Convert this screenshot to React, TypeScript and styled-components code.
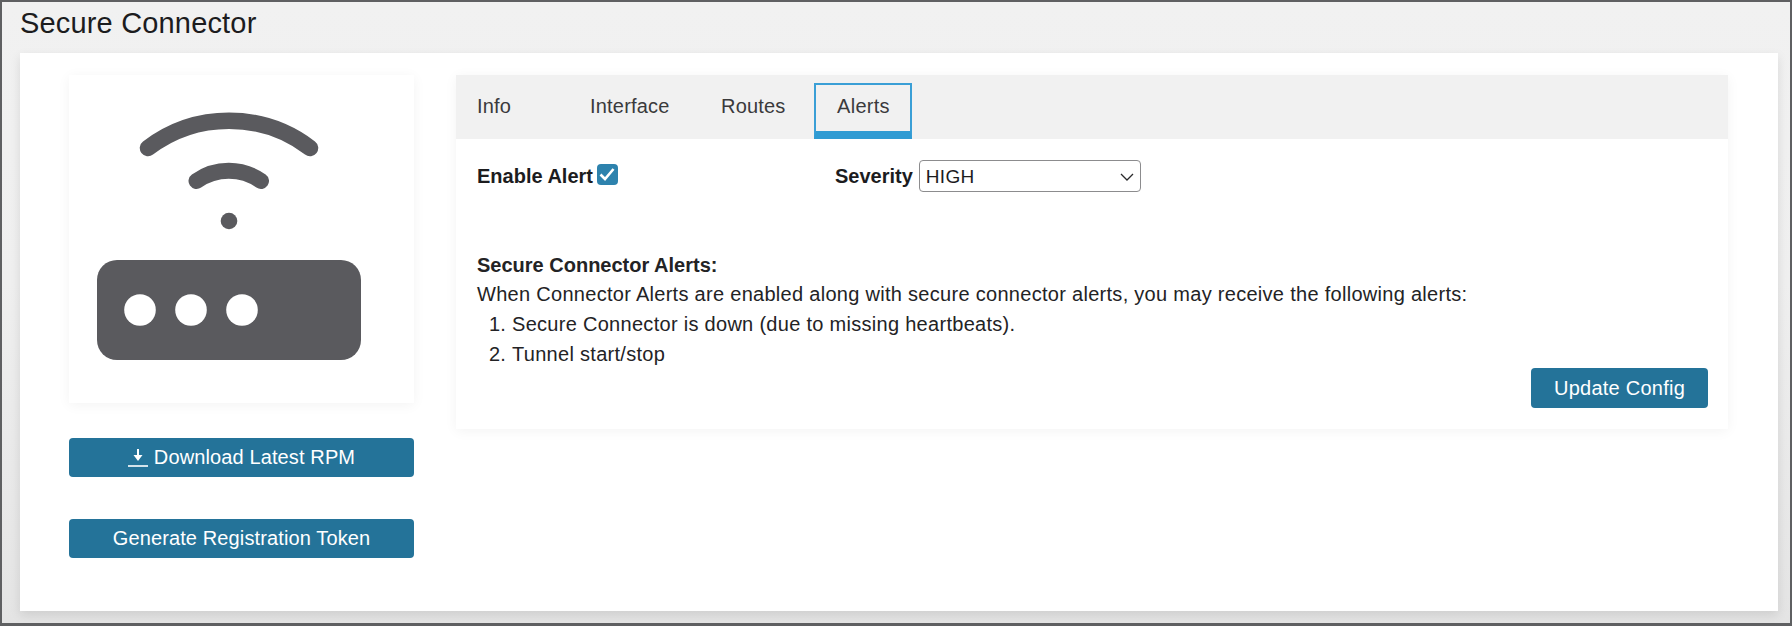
import React from "react";
import styled, { createGlobalStyle } from "styled-components";

const Global = createGlobalStyle`
  html, body { margin: 0; padding: 0; background: #fff; }
  body { font-family: "Liberation Sans", Arial, sans-serif; color: #1f1f21; }
`;

const Frame = styled.div`
  box-sizing: border-box;
  width: 1792px;
  height: 626px;
  border: 2px solid #5f6062;
  border-width: 2px 2px 3px 2px;
  background: linear-gradient(#f1f1f1, #efefef 45%, #e4e4e4);
  padding: 0 12px 0 18px;
  display: flex;
  flex-direction: column;
`;

const Title = styled.h1`
  margin: 0;
  height: 51px;
  font-size: 29px;
  font-weight: 400;
  line-height: 42px;
  color: #1c1c1e;
  letter-spacing: 0.17px;
`;

const Panel = styled.main`
  box-sizing: border-box;
  width: 1758px;
  height: 558px;
  background: #fff;
  box-shadow: 0 4px 10px rgba(0, 0, 0, 0.1);
  padding: 22px 50px 0 49px;
  display: flex;
  gap: 42px;
  align-items: flex-start;
`;

const Sidebar = styled.aside`
  width: 345px;
  flex: none;
  display: flex;
  flex-direction: column;
`;

const IconCard = styled.div`
  height: 328px;
  background: #fff;
  box-shadow: 0 2px 12px rgba(0, 0, 0, 0.05);
  margin-bottom: 35px;
`;

const RouterIcon = styled.svg`
  display: block;
`;

const Button = styled.button`
  box-sizing: border-box;
  width: 100%;
  height: 39px;
  border: none;
  border-radius: 4px;
  background: #247399;
  color: #fff;
  font-family: "Liberation Sans", Arial, sans-serif;
  font-size: 20px;
  letter-spacing: 0.12px;
  display: flex;
  align-items: center;
  justify-content: center;
  gap: 6px;
  padding: 0;
  flex: none;
`;

const SideButton = styled(Button)`
  margin-bottom: 42px;
`;

const UpdateButton = styled(Button)`
  width: 177px;
  height: 40px;
  letter-spacing: 0.25px;
`;

const Content = styled.section`
  width: 1272px;
  flex: none;
  background: #fff;
  box-shadow: 0 2px 12px rgba(0, 0, 0, 0.05);
  height: 354px;
`;

const TabBar = styled.nav`
  height: 64px;
  background: #f1f1f1;
  display: flex;
  align-items: flex-end;
`;

const Tab = styled.div<{ $width: number; $inset?: number; $active?: boolean }>`
  box-sizing: border-box;
  width: ${(p) => p.$width}px;
  height: 56px;
  font-size: 20px;
  letter-spacing: 0.2px;
  color: #3a3a3c;
  display: flex;
  align-items: center;
  padding-left: ${(p) => p.$inset ?? 0}px;
  padding-bottom: ${(p) => (p.$active ? 4 : 10)}px;
  ${(p) =>
    p.$active
      ? `border: 2px solid #3a9fd6; border-bottom: 8px solid #2f9bd3; padding-left: 21px; letter-spacing: 0.3px;`
      : ""}
`;

const Body = styled.div`
  padding: 21px 20px 0 21px;
  font-size: 20px;
  letter-spacing: 0.29px;
  color: #232325;
`;

const OptionRow = styled.div`
  display: flex;
  align-items: center;
  height: 32px;
`;

const Label = styled.label`
  font-weight: 700;
  letter-spacing: 0;
  color: #1c1c1e;
`;

const CheckBox = styled.span`
  width: 21px;
  height: 21px;
  border-radius: 4px;
  background: #2d82ad;
  margin-left: 4px;
  margin-top: -4px;
  display: flex;
  align-items: center;
  justify-content: center;
`;

const SeverityLabel = styled(Label)`
  margin-left: 217px;
`;

const SelectWrap = styled.span`
  position: relative;
  display: block;
  margin-left: 6px;
  width: 222px;
  height: 32px;
`;

const Select = styled.select`
  box-sizing: border-box;
  display: block;
  width: 100%;
  height: 100%;
  appearance: none;
  padding: 0 0 0 6px;
  border: 1px solid #8c8c8e;
  border-radius: 4px;
  background: #fff;
  font-family: "Liberation Sans", Arial, sans-serif;
  font-size: 19px;
  letter-spacing: 0.3px;
  color: #1c1c1e;
`;

const Chevron = styled.svg`
  position: absolute;
  right: 7px;
  top: 13px;
  pointer-events: none;
`;

const Notes = styled.div`
  margin-top: 59px;
  line-height: 29.8px;
`;

const NoteTitle = styled.strong`
  display: block;
  font-weight: 700;
  letter-spacing: 0;
  line-height: 29px;
`;

const NoteList = styled.ol`
  margin: 0;
  padding-left: 35px;
`;

const Footer = styled.div`
  display: flex;
  justify-content: flex-end;
  margin-top: -1px;
`;

export default function App() {
  return (
    <>
      <Global />
      <Frame>
        <Title>Secure Connector</Title>
        <Panel>
          <Sidebar>
            <IconCard>
              <RouterIcon width="345" height="328" viewBox="0 0 345 328" fill="none">
                <path d="M79 73 A134 134 0 0 1 241 73" stroke="#5a5a5e" strokeWidth="16.5" strokeLinecap="round" />
                <path d="M127.5 106 A56 56 0 0 1 192 106" stroke="#5a5a5e" strokeWidth="16" strokeLinecap="round" />
                <circle cx="160" cy="146" r="8.3" fill="#5a5a5e" />
                <rect x="28" y="185" width="264" height="100" rx="20" fill="#5a5a5e" />
                <circle cx="71" cy="235" r="15.8" fill="#fff" />
                <circle cx="122" cy="235" r="15.8" fill="#fff" />
                <circle cx="173" cy="235" r="15.8" fill="#fff" />
              </RouterIcon>
            </IconCard>
            <SideButton>
              <svg width="20" height="20" viewBox="0 0 20 20" fill="none">
                <path d="M10 1v9" stroke="#fff" strokeWidth="2" />
                <path d="M5.5 7h9L10 13z" fill="#fff" />
                <path d="M0 18h20" stroke="#fff" strokeWidth="1.6" />
              </svg>
              Download Latest RPM
            </SideButton>
            <SideButton>Generate Registration Token</SideButton>
          </Sidebar>
          <Content>
            <TabBar>
              <Tab $width={134} $inset={21}>Info</Tab>
              <Tab $width={131}>Interface</Tab>
              <Tab $width={93}>Routes</Tab>
              <Tab $width={98} $active>Alerts</Tab>
            </TabBar>
            <Body>
              <OptionRow>
                <Label>Enable Alert</Label>
                <CheckBox>
                  <svg width="16" height="14" viewBox="0 0 16 14" fill="none">
                    <path d="M1.5 7.5l4.5 4.5 8.5-10" stroke="#fff" strokeWidth="2.6" />
                  </svg>
                </CheckBox>
                <SeverityLabel>Severity</SeverityLabel>
                <SelectWrap>
                  <Select defaultValue="HIGH">
                    <option>HIGH</option>
                    <option>MEDIUM</option>
                    <option>LOW</option>
                  </Select>
                  <Chevron width="14" height="8" viewBox="0 0 14 8" fill="none">
                    <path d="M1 1l6 6 6-6" stroke="#2a2a2c" strokeWidth="1.3" />
                  </Chevron>
                </SelectWrap>
              </OptionRow>
              <Notes>
                <NoteTitle>Secure Connector Alerts:</NoteTitle>
                When Connector Alerts are enabled along with secure connector alerts, you may receive the following alerts:
                <NoteList>
                  <li>Secure Connector is down (due to missing heartbeats).</li>
                  <li>Tunnel start/stop</li>
                </NoteList>
              </Notes>
              <Footer>
                <UpdateButton>Update Config</UpdateButton>
              </Footer>
            </Body>
          </Content>
        </Panel>
      </Frame>
    </>
  );
}
